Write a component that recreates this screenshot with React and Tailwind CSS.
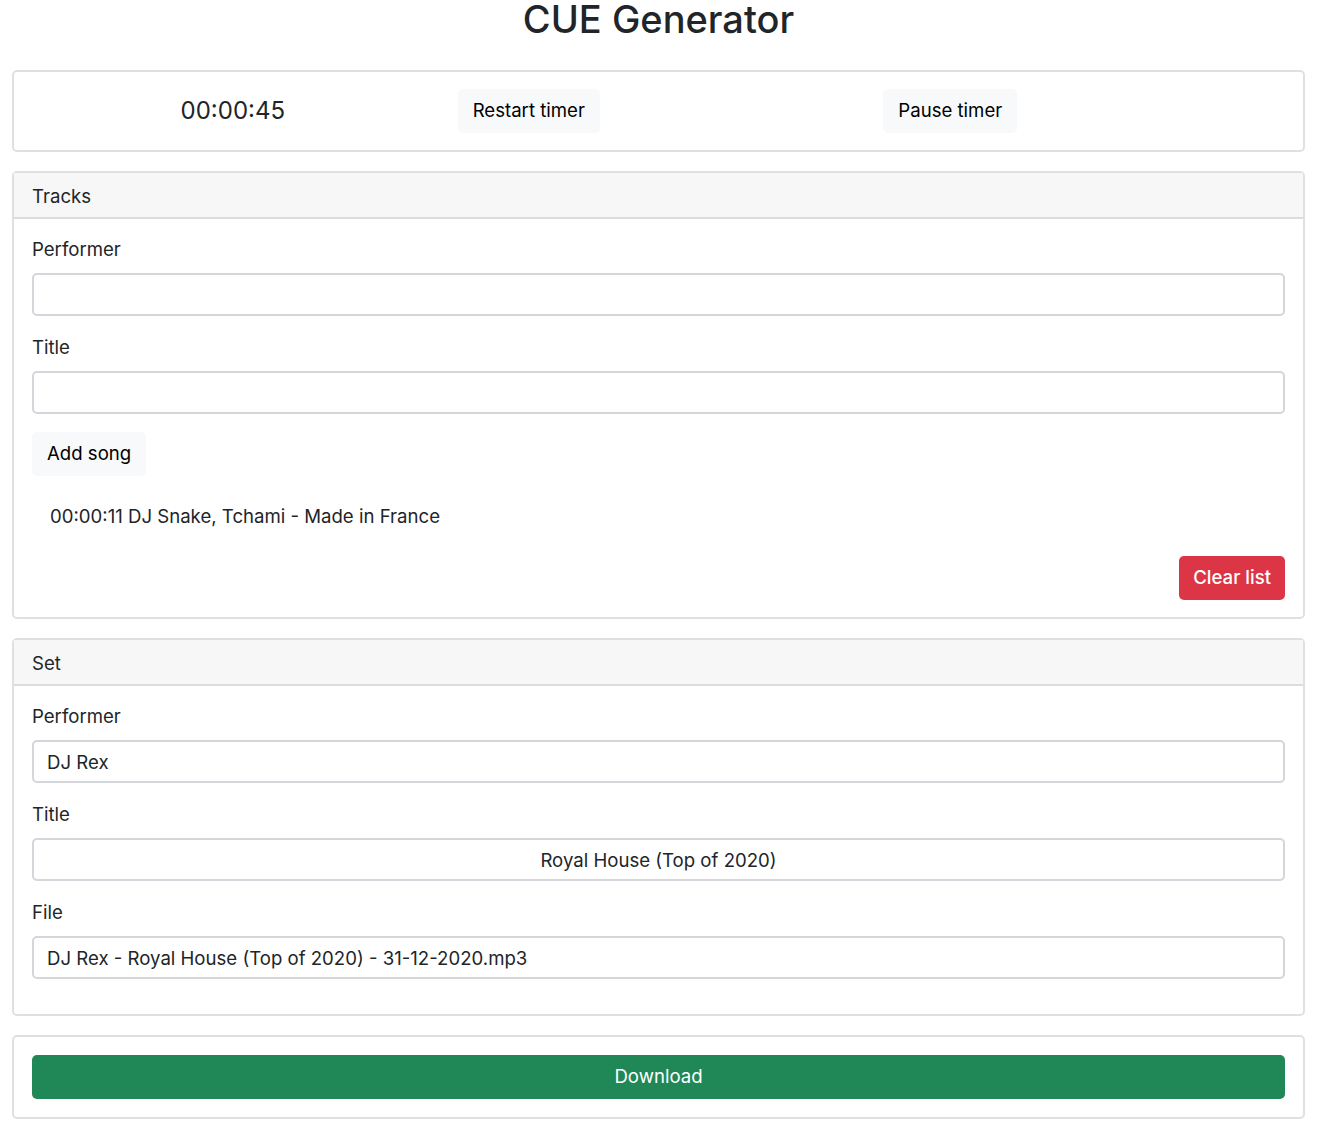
import { useState } from "react";

const inputClass =
  "h-[43px] w-full rounded-[5px] border-2 border-[#d3d6da] bg-white px-[13px] text-[18.6px] text-[#212529] outline-none";

const lightBtn =
  "h-[44px] rounded-[5px] bg-[#f8f9fa] px-[15px] text-[18.6px] text-black";

const Card = ({ header, children, className = "" }) => (
  <div className="mb-[19px] rounded-[5px] border-2 border-[#e0e0e0] bg-white">
    {header && (
      <div className="flex h-[46px] items-center border-b-2 border-[#dcdcdc] bg-[#f7f7f7] px-[18px] pt-[3px] text-[18.6px]">
        {header}
      </div>
    )}
    <div className={className}>{children}</div>
  </div>
);

const Field = ({ label, value, center }) => (
  <div className="mb-[18px]">
    <label className="mb-[10px] block text-[18.6px] leading-[27px]">{label}</label>
    <input
      className={`${inputClass} ${center ? "text-center" : ""}`}
      defaultValue={value}
    />
  </div>
);

export default function App() {
  const [tracks] = useState([
    { time: "00:00:11", performer: "DJ Snake, Tchami", title: "Made in France" },
  ]);

  return (
    <div
      className="min-h-[1134px] bg-white pr-[15px] pl-[12px] text-[#212529]"
      style={{ fontFamily: "Inter, 'Noto Sans', sans-serif" }}
    >
      <h1 className="mt-[-9px] mb-[23px] text-center text-[38px] leading-[56px] font-medium">
        CUE Generator
      </h1>

      {/* Timer */}
      <Card className="grid grid-cols-3 px-[6px] py-[17px]">
        <div className="flex items-center justify-center text-[24px]">00:00:45</div>
        <div className="px-[12px]">
          <button className={lightBtn}>Restart timer</button>
        </div>
        <div className="px-[12px]">
          <button className={lightBtn}>Pause timer</button>
        </div>
      </Card>

      {/* Tracks */}
      <Card header="Tracks" className="px-[18px] pt-[17px] pb-[17px]">
        <Field label="Performer" value="" />
        <Field label="Title" value="" />
        <button className={lightBtn}>Add song</button>
        <ul className="mt-[27px] mb-[26px] pl-[18px] text-[18.6px] leading-[27px]">
          {tracks.map((t) => (
            <li key={t.time}>
              {t.time} {t.performer} - {t.title}
            </li>
          ))}
        </ul>
        <div className="flex justify-end">
          <button className="h-[44px] rounded-[5px] bg-[#dc3545] px-[14px] text-[18.6px] font-medium text-white">
            Clear list
          </button>
        </div>
      </Card>

      {/* Set */}
      <Card header="Set" className="px-[18px] pt-[17px] pb-[17px]">
        <Field label="Performer" value="DJ Rex" />
        <Field label="Title" value="Royal House (Top of 2020)" center />
        <Field label="File" value="DJ Rex - Royal House (Top of 2020) - 31-12-2020.mp3" />
      </Card>

      {/* Download */}
      <Card className="px-[18px] py-[18px]">
        <button className="h-[44px] w-full rounded-[5px] bg-[#208757] text-[18.6px] text-white">
          Download
        </button>
      </Card>
    </div>
  );
}
